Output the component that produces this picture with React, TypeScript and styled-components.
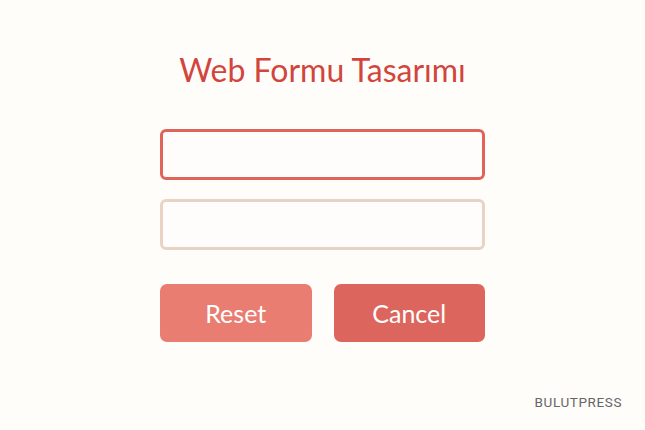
import React from "react";
import styled, { createGlobalStyle } from "styled-components";

const GlobalStyle = createGlobalStyle`
  html, body {
    margin: 0;
    padding: 0;
    background: #fffdfa;
  }
  body {
    font-family: "Lato", "Noto Sans", sans-serif;
  }
`;

const Page = styled.div`
  position: relative;
  width: 645px;
  height: 430px;
  display: flex;
  flex-direction: column;
  align-items: center;
  box-sizing: border-box;
  padding-top: 50px;
`;

const Title = styled.h1`
  margin: 0 0 39px;
  font-size: 32px;
  font-weight: 400;
  color: #d2453c;
  line-height: 40px;
`;

const Form = styled.form`
  width: 325px;
  display: flex;
  flex-direction: column;
`;

const Field = styled.input<{ $active?: boolean }>`
  box-sizing: border-box;
  width: 100%;
  height: 51px;
  margin-bottom: 19px;
  border: 3px solid ${(p) => (p.$active ? "#e0645a" : "#e9d3c5")};
  border-radius: 6px;
  background: #fffdfb;
  outline: none;
`;

const Buttons = styled.div`
  display: flex;
  gap: 22px;
  margin-top: 15px;
`;

const Button = styled.button<{ $tone: "light" | "dark" }>`
  flex: 1;
  height: 58px;
  border: none;
  border-radius: 7px;
  background: ${(p) => (p.$tone === "light" ? "#e97d71" : "#dc665d")};
  color: #fff;
  font-family: "Lato", "Noto Sans", sans-serif;
  font-size: 25px;
  cursor: pointer;
`;

const Brand = styled.div`
  position: absolute;
  right: 23px;
  bottom: 20px;
  font-family: "Roboto", "Liberation Sans", sans-serif;
  font-size: 13.5px;
  letter-spacing: 0.6px;
  color: #666;
`;

export default function App() {
  return (
    <>
      <GlobalStyle />
      <Page>
        <Title>Web Formu Tasarımı</Title>
        <Form onSubmit={(e) => e.preventDefault()}>
          <Field $active />
          <Field />
          <Buttons>
            <Button type="button" $tone="light">Reset</Button>
            <Button type="button" $tone="dark">Cancel</Button>
          </Buttons>
        </Form>
        <Brand>BULUTPRESS</Brand>
      </Page>
    </>
  );
}
